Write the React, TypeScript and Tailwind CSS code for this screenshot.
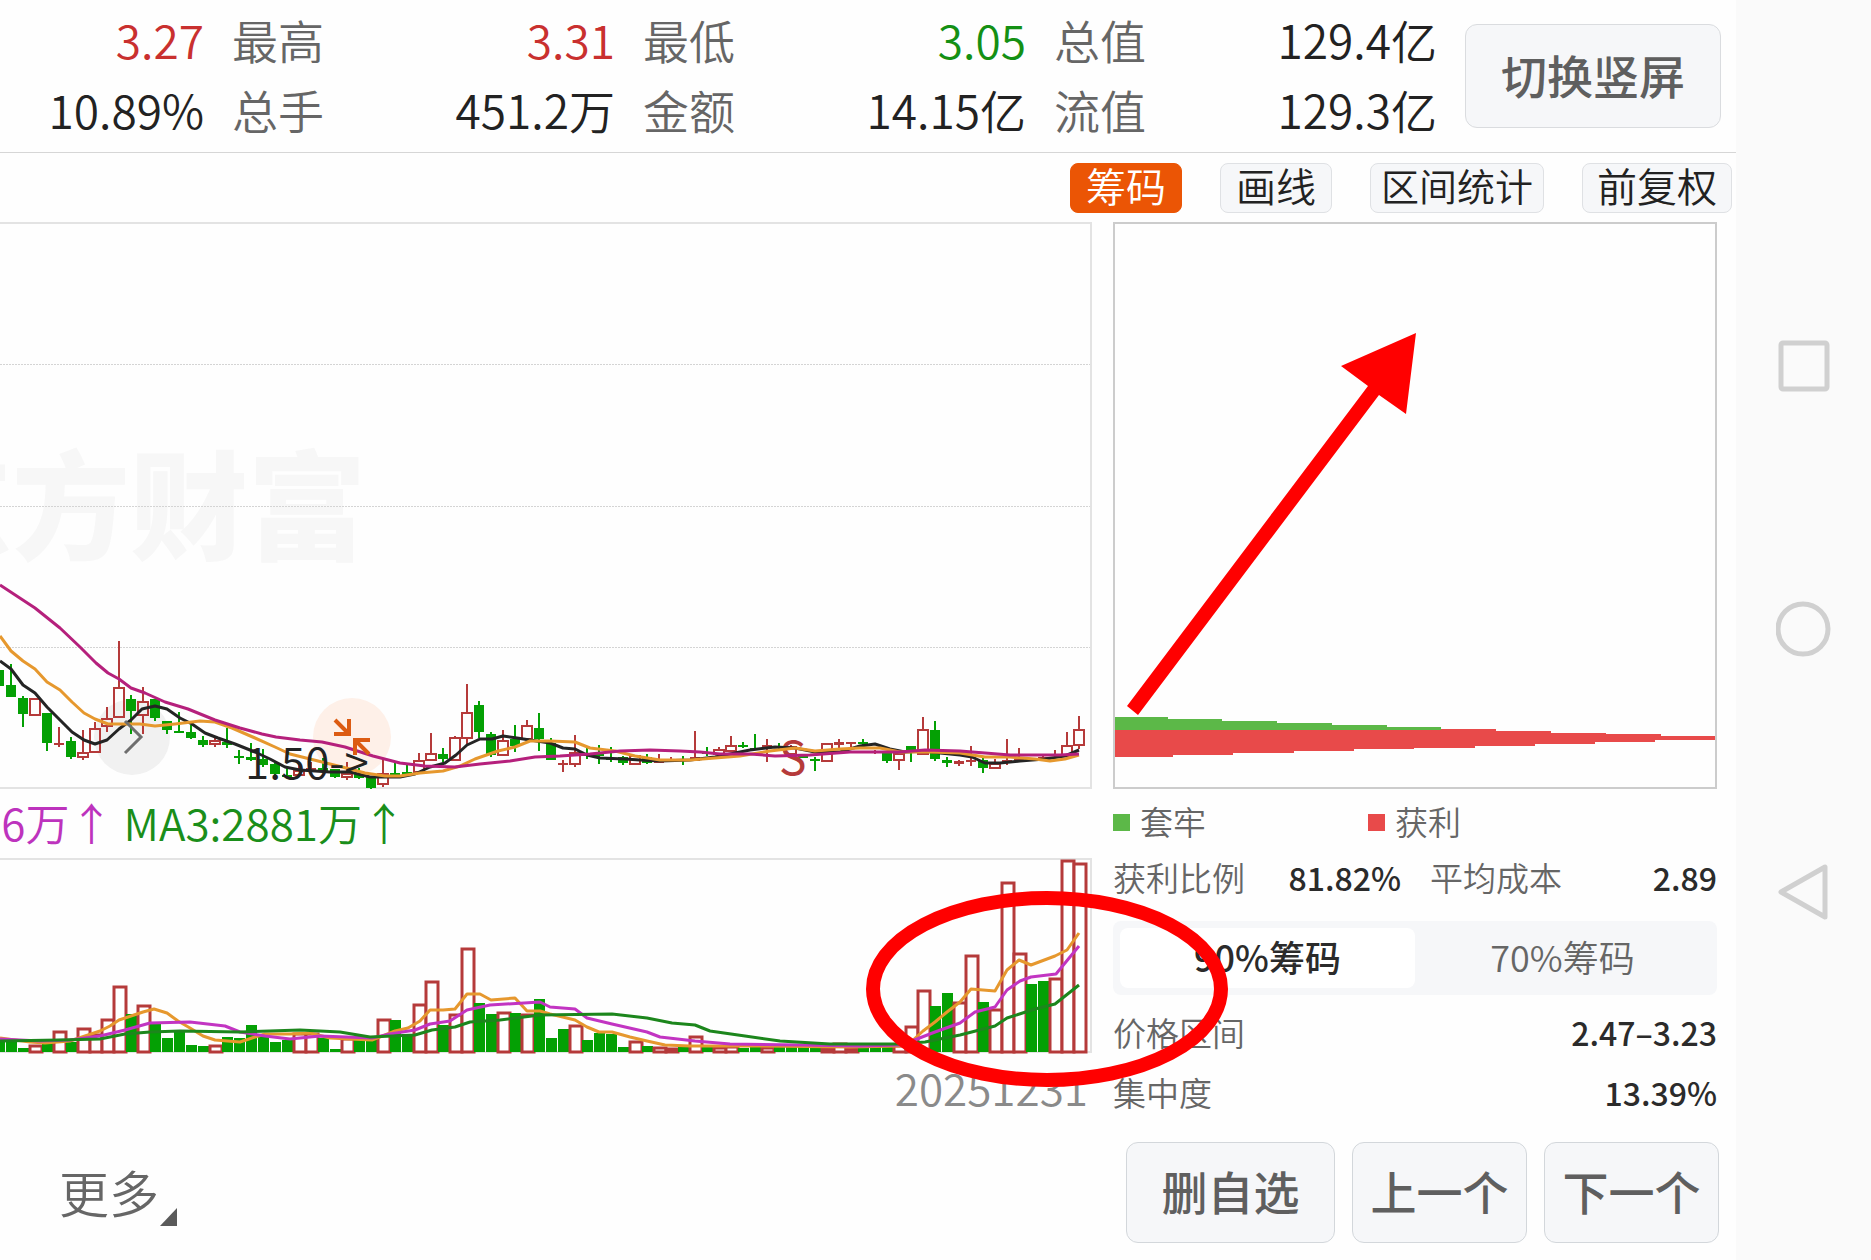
import React, { useState } from "react";

const RED = "#b53a3a";
const GREEN = "#04a004";

// [color, high, bodyTop, bodyBottom, low]
type Candle = [string, number, number, number, number];

// first candle is half outside of the screen
const candles: Candle[] = [
  ["g", 668, 670, 686, 699],
  ["g", 664, 685, 697, 697],
  ["g", 696, 698, 714, 727],
  ["r", 698, 698, 716, 716],
  ["g", 713, 713, 743, 751],
  ["r", 727, 743, 745, 747],
  ["g", 737, 741, 757, 759],
  ["r", 730, 752, 758, 760],
  ["r", 722, 728, 753, 753],
  ["r", 707, 718, 727, 732],
  ["r", 641, 687, 718, 718],
  ["g", 695, 699, 711, 734],
  ["r", 687, 701, 716, 734],
  ["g", 699, 699, 718, 721],
  ["g", 721, 721, 730, 734],
  ["g", 712, 731, 733, 733],
  ["g", 725, 732, 738, 739],
  ["g", 736, 740, 745, 747],
  ["r", 738, 740, 745, 747],
  ["g", 728, 742, 745, 748],
  ["g", 750, 756, 758, 764],
  ["g", 743, 757, 760, 761],
  ["g", 749, 759, 765, 767],
  ["g", 763, 764, 774, 776],
  ["g", 767, 775, 777, 777],
  ["r", 763, 770, 776, 776],
  ["r", 762, 768, 770, 770],
  ["g", 758, 768, 772, 772],
  ["g", 769, 769, 777, 778],
  ["r", 762, 773, 778, 780],
  ["g", 768, 774, 778, 779],
  ["g", 777, 777, 788, 789],
  ["r", 760, 773, 785, 787],
  ["g", 763, 773, 777, 777],
  ["g", 765, 772, 775, 775],
  ["r", 753, 760, 773, 773],
  ["r", 733, 753, 761, 761],
  ["g", 748, 754, 759, 762],
  ["r", 736, 737, 761, 761],
  ["r", 684, 712, 739, 745],
  ["g", 701, 705, 732, 738],
  ["g", 732, 734, 755, 757],
  ["r", 730, 740, 756, 756],
  ["g", 725, 739, 746, 752],
  ["r", 720, 725, 740, 740],
  ["g", 713, 728, 739, 751],
  ["g", 738, 743, 760, 760],
  ["r", 760, 763, 765, 772],
  ["r", 735, 752, 765, 767],
  ["g", 747, 754, 756, 759],
  ["g", 745, 754, 756, 764],
  ["g", 747, 758, 760, 762],
  ["g", 756, 757, 763, 765],
  ["r", 755, 755, 765, 765],
  ["g", 754, 757, 763, 764],
  ["r", 754, 760, 763, 763],
  ["r", 757, 760, 762, 762],
  ["g", 756, 759, 761, 765],
  ["r", 731, 757, 761, 761],
  ["g", 747, 752, 754, 756],
  ["r", 747, 749, 755, 755],
  ["r", 736, 745, 752, 752],
  ["g", 742, 745, 747, 748],
  ["g", 734, 748, 750, 750],
  ["r", 739, 745, 747, 762],
  ["g", 743, 746, 748, 749],
  ["r", 745, 746, 755, 757],
  ["g", 755, 756, 758, 758],
  ["g", 757, 759, 761, 771],
  ["r", 743, 743, 762, 762],
  ["r", 739, 742, 745, 748],
  ["r", 742, 742, 744, 747],
  ["g", 739, 742, 744, 747],
  ["r", 750, 751, 753, 754],
  ["g", 753, 753, 761, 763],
  ["r", 753, 753, 761, 770],
  ["g", 746, 746, 752, 762],
  ["r", 717, 729, 755, 755],
  ["g", 721, 730, 759, 761],
  ["g", 757, 760, 763, 767],
  ["r", 760, 761, 764, 766],
  ["r", 746, 760, 762, 766],
  ["g", 758, 760, 768, 773],
  ["r", 759, 763, 769, 769],
  ["r", 739, 760, 762, 765],
  ["r", 748, 759, 761, 761],
  ["r", 758, 758, 760, 760],
  ["r", 756, 757, 758, 759],
  ["r", 750, 754, 756, 757],
  ["r", 732, 745, 757, 757],
  ["r", 716, 729, 746, 749],
];

const volumes: [string, number][] = [
  ["g", 1041], ["g", 1041], ["g", 1048], ["r", 1045], ["g", 1043], ["r", 1031],
  ["g", 1042], ["r", 1028], ["r", 1034], ["r", 1019], ["r", 986], ["g", 1014],
  ["r", 1005], ["g", 1024], ["g", 1038], ["g", 1030], ["g", 1045], ["g", 1046],
  ["r", 1045], ["g", 1037], ["g", 1038], ["g", 1025], ["g", 1034], ["g", 1042],
  ["g", 1040], ["r", 1033], ["r", 1033], ["g", 1038], ["g", 1049], ["r", 1038],
  ["g", 1039], ["g", 1039], ["r", 1019], ["g", 1020], ["g", 1034], ["r", 1004],
  ["r", 981], ["g", 1025], ["r", 1014], ["r", 948], ["g", 1003], ["g", 1014],
  ["r", 1012], ["g", 1013], ["r", 1014], ["g", 999], ["g", 1038], ["g", 1029],
  ["r", 1025], ["g", 1040], ["g", 1033], ["g", 1034], ["g", 1047], ["r", 1041],
  ["g", 1046], ["r", 1047], ["r", 1048], ["g", 1047], ["r", 1036], ["g", 1047],
  ["r", 1047], ["r", 1046], ["g", 1048], ["g", 1045], ["r", 1047], ["g", 1047],
  ["g", 1047], ["g", 1047], ["g", 1047], ["r", 1048], ["r", 1043], ["r", 1048],
  ["g", 1046], ["g", 1046], ["g", 1046], ["r", 1045], ["r", 1026], ["r", 990],
  ["g", 1006], ["g", 993], ["r", 1002], ["r", 955], ["g", 1002], ["r", 1009],
  ["r", 882], ["r", 953], ["g", 984], ["g", 981], ["r", 978], ["r", 860],
  ["r", 863],
];

const priceLines = [
  {
    color: "#242424",
    points:
      "0,661 11,669 23,685 35,693 47,707 60,720 72,732 84,740 95,744 107,740 119,729 131,720 142,709 155,706 167,709 180,718 192,724 205,733 218,738 235,744 255,752 270,759 285,767 300,770 330,772 350,772 370,777 400,777 415,774 430,767 445,763 456,755 467,745 480,739 492,739 503,736 517,738 530,740 550,743 563,748 575,749 587,755 600,758 625,759 640,760 660,761 690,760 715,757 735,753 750,750 775,747 795,748 815,752 840,752 860,746 875,744 890,749 905,752 925,751 940,753 960,755 972,757 985,763 1000,763 1020,761 1045,759 1065,756 1079,750",
  },
  {
    color: "#e6982e",
    points:
      "0,636 11,651 23,661 35,669 47,682 60,690 72,702 84,713 95,719 108,724 120,724 140,724 155,726 175,724 200,721 215,722 232,728 255,738 275,747 290,754 310,759 330,764 350,769 365,773 385,776 400,776 420,773 443,771 460,766 475,759 498,751 515,747 530,741 550,741 575,742 590,748 615,751 635,756 660,760 690,760 715,758 740,756 770,751 795,748 815,751 840,749 860,748 880,748 900,752 930,752 960,753 985,757 1010,757 1035,759 1050,761 1065,759 1079,755",
  },
  {
    color: "#b5207c",
    points:
      "0,585 35,608 60,628 80,647 96,663 108,673 119,679 131,688 145,693 165,702 188,709 215,720 240,728 262,734 276,737 300,740 322,742 345,747 373,756 400,763 425,766 455,767 480,764 510,761 535,757 560,756 590,754 620,751 650,750 680,751 700,752 720,754 750,754 775,756 810,755 850,752 900,752 925,750 960,751 985,753 1010,755 1060,755 1079,754",
  },
];

const volumeLines = [
  {
    color: "#e6982e",
    points:
      "0,1038 30,1042 45,1043 70,1041 85,1036 100,1031 110,1026 119,1020 131,1016 143,1012 154,1009 167,1013 178,1021 190,1028 203,1036 215,1040 240,1042 255,1037 265,1034 290,1034 310,1033 330,1038 350,1039 372,1040 385,1035 395,1031 408,1028 420,1021 430,1010 443,1010 455,1009 467,994 480,994 491,1000 515,998 527,1011 540,1011 550,1014 575,1020 587,1027 599,1032 612,1032 630,1037 647,1041 665,1045 690,1046 760,1046 850,1047 900,1046 911,1042 923,1031 935,1022 947,1012 960,1002 971,989 995,991 1007,970 1019,960 1031,965 1055,956 1067,950 1079,933",
  },
  {
    color: "#c234c2",
    points:
      "0,1039 40,1041 70,1040 100,1036 125,1030 150,1023 190,1022 225,1026 240,1032 265,1036 290,1039 320,1036 372,1038 390,1034 415,1030 430,1024 450,1021 467,1010 490,1005 540,1002 550,1007 575,1009 587,1018 612,1024 647,1032 660,1037 695,1041 730,1044 800,1045 860,1046 900,1045 917,1039 935,1032 960,1023 975,1012 995,1007 1007,990 1020,981 1031,977 1056,974 1079,946",
  },
  {
    color: "#1c861c",
    points:
      "0,1041 60,1040 100,1039 125,1034 150,1032 180,1031 240,1032 300,1030 340,1032 370,1037 415,1035 432,1030 455,1027 470,1022 500,1020 540,1015 612,1014 647,1018 672,1023 695,1025 710,1031 745,1036 780,1041 830,1044 900,1044 925,1042 960,1035 995,1026 1007,1018 1035,1009 1055,1004 1079,985",
  },
];

const stats = [
  [
    { label: "最高", value: "3.31", color: "text-[#c9302f]" },
    { label: "总手", value: "451.2万", color: "text-[#222222]" },
  ],
  [
    { label: "最低", value: "3.05", color: "text-[#149014]" },
    { label: "金额", value: "14.15亿", color: "text-[#222222]" },
  ],
  [
    { label: "总值", value: "129.4亿", color: "text-[#222222]" },
    { label: "流值", value: "129.3亿", color: "text-[#222222]" },
  ],
];

const centerX = (i: number) => 12 * i - 1;

function Lines({ lines }: { lines: { color: string; points: string }[] }) {
  return (
    <>
      {lines.map((l) => (
        <polyline
          key={l.color}
          points={l.points}
          fill="none"
          stroke={l.color}
          strokeWidth="3"
          strokeLinejoin="round"
        />
      ))}
    </>
  );
}

function PriceChart() {
  return (
    <div className="flex justify-end border-y-2 border-r-2 border-[#e3e3e3]">
      <svg
        className="block shrink-0 overflow-visible"
        width="1090"
        height="563"
        viewBox="0 224 1090 563"
      >
        <text x="-106" y="551" fontSize="118" fontWeight="900" fill="#f7f7f7">
          东方财富
        </text>
        {[364, 506, 647].map((y) => (
          <line
            key={y}
            x1="0"
            x2="1090"
            y1={y + 0.5}
            y2={y + 0.5}
            stroke="#d4d4d4"
            strokeDasharray="2 1"
          />
        ))}
        <circle cx="132" cy="737" r="38" fill="#f1f1f1" />
        <circle cx="352" cy="737" r="39" fill="#fef0e8" />
        {candles.map(([c, high, top, bottom, low], i) => {
          const x = centerX(i);
          const color = c === "r" ? RED : GREEN;
          const hollow = c === "r" && bottom - top > 4;
          return (
            <g key={i} stroke={color} strokeWidth="2" fill="none">
              <path d={`M${x} ${high}V${top}M${x} ${bottom}V${low}`} />
              {hollow ? (
                <rect x={x - 5} y={top + 1} width="10" height={bottom - top - 2} />
              ) : (
                <rect
                  x={x - 5}
                  y={top}
                  width="10"
                  height={bottom - top}
                  fill={color}
                  stroke="none"
                />
              )}
            </g>
          );
        })}
        <text x="779" y="775" fontSize="46" fill={RED}>
          S
        </text>
        <Lines lines={priceLines} />
        <path d="M125 721L141 737L125 753" fill="none" stroke="#6e6e6e" strokeWidth="3" />
        <path
          d="M335 720L348 733M334 734H349V719M370 740H355V755M356 741L369 754"
          fill="none"
          stroke="#dc5b12"
          strokeWidth="4"
        />
        <text x="245" y="779" fontSize="44" fontWeight="350" fill="#222222">
          1.50-&gt;
        </text>
      </svg>
    </div>
  );
}

function VolumeChart() {
  return (
    <div className="flex justify-end border-y-2 border-r-2 border-[#e3e3e3]">
      <svg
        className="block shrink-0 overflow-visible"
        width="1090"
        height="191"
        viewBox="0 860 1090 191"
      >
        {volumes.map(([c, top], i) => {
          const x = centerX(i);
          return c === "r" ? (
            <rect
              key={i}
              x={x - 5}
              y={top + 1}
              width="12"
              height={1051 - top}
              fill="#ffffff"
              stroke={RED}
              strokeWidth="3"
            />
          ) : (
            <rect key={i} x={x - 5} y={top} width="11" height={1052 - top} fill={GREEN} />
          );
        })}
        <Lines lines={volumeLines} />
      </svg>
    </div>
  );
}

function ChipChart() {
  return (
    <div className="border-2 border-[#cccccc]">
      <svg className="block" width="600" height="563" viewBox="1115 224 600 563">
        <path
          d="M1112 717H1168V719H1222V721H1277V723H1332V725H1387V727H1441V731H1112Z"
          fill="#5cb848"
        />
        <path
          d="M1112 730H1441V729H1496V731H1551V733H1606V734H1661V736H1717V740H1655V742H1595V744H1535V746H1475V748H1414V749H1354V751H1294V753H1233V755H1173V757H1112Z"
          fill="#e84a4a"
        />
        <path d="M1127 706L1368 386L1341 366L1416 333L1406 414L1379 395L1138 715Z" fill="#ff0000" />
      </svg>
    </div>
  );
}

function Row({ label, value }: { label: string; value: string }) {
  return (
    <div className="flex justify-between">
      <dt className="font-[350] text-[#666666]">{label}</dt>
      <dd className="text-[32px] font-medium text-[#2b2b2b]">{value}</dd>
    </div>
  );
}

export default function App() {
  const [tool, setTool] = useState("筹码");
  const [range, setRange] = useState("90%筹码");

  const toolCol = (name: string) =>
    tool === name
      ? "bg-[#eb5505] border-[#eb5505] text-white"
      : "bg-[#f6f7f9] border-[#dfe1e4] text-[#222222]";

  return (
    <div className="flex min-h-screen bg-[#fefefe] font-['Noto_Sans_CJK_SC',sans-serif]">
      <div className="flex-1 min-w-0 overflow-hidden">
        <header className="flex justify-end gap-7 border-b border-[#d6d6d6] pt-1 pb-2 pr-[15px] text-[46px] leading-[70px] font-[350]">
          <div className="flex-1 text-right">
            <p className="text-[#c9302f]">3.27</p>
            <p className="text-[#222222]">10.89%</p>
          </div>
          {stats.map((col) => (
            <dl key={col[0].label} className="w-[383px]">
              {col.map((s) => (
                <div key={s.label} className="flex justify-between">
                  <dt className="text-[#666666]">{s.label}</dt>
                  <dd className={s.color}>{s.value}</dd>
                </div>
              ))}
            </dl>
          ))}
          <button className="mt-5 h-[104px] w-64 rounded-xl border border-[#dadcdf] bg-[#f6f7f9] pb-1 font-medium text-[#5f5f5f]">
            切换竖屏
          </button>
        </header>

        <nav className="flex justify-end gap-[38px] pt-[10px] pr-1 pb-[9px] text-[40px] leading-[42px] font-[350]">
          <button
            className={`h-[50px] w-[112px] rounded-lg border pb-[6px] ${toolCol("筹码")}`}
            onClick={() => setTool("筹码")}
          >
            筹码
          </button>
          <button
            className={`h-[50px] w-[112px] rounded-lg border pb-[6px] ${toolCol("画线")}`}
            onClick={() => setTool("画线")}
          >
            画线
          </button>
          <button
            className={`h-[50px] w-[174px] rounded-lg border pb-[6px] text-[38px] ${toolCol("区间统计")}`}
            onClick={() => setTool("区间统计")}
          >
            区间统计
          </button>
          <button
            className={`h-[50px] w-[150px] rounded-lg border pb-[6px] ${toolCol("前复权")}`}
            onClick={() => setTool("前复权")}
          >
            前复权
          </button>
        </nav>

        <main className="flex gap-[21px] pr-[19px]">
          <section className="flex-1 min-w-0">
            <PriceChart />
            <div className="flex h-[69px] w-[406px] items-center justify-end gap-[10px] overflow-hidden pb-1 text-[44px] whitespace-nowrap font-[350]">
              <span className="text-[#bd33bd]">66万↑</span>
              <span className="text-[#1a8e1a]">MA3:2881万↑</span>
            </div>
            <VolumeChart />
            <p className="pr-1 text-right text-[44px] leading-[69px] text-[#8a8a8a] font-[350]">
              20251231
            </p>
          </section>

          <aside className="relative w-[604px] shrink-0 text-[33px] leading-[50px]">
            <ChipChart />
            <ul className="flex h-[63px] items-center font-[350] text-[#666666]">
              <li className="flex w-[255px] items-center gap-[10px]">
                <span className="mt-1 size-[17px] bg-[#5cb848]" />
                套牢
              </li>
              <li className="flex items-center gap-[10px]">
                <span className="mt-1 size-[17px] bg-[#e84a4a]" />
                获利
              </li>
            </ul>
            <dl className="flex gap-[29px]">
              <div className="w-[288px]">
                <Row label="获利比例" value="81.82%" />
              </div>
              <div className="flex-1">
                <Row label="平均成本" value="2.89" />
              </div>
            </dl>
            <div className="mt-[19px] flex h-[74px] rounded-lg bg-[#f6f7f9] p-[7px] text-[36px]">
              {["90%筹码", "70%筹码"].map((r) => (
                <button
                  key={r}
                  onClick={() => setRange(r)}
                  className={
                    range === r
                      ? "flex-1 rounded-lg bg-white pb-1 font-medium text-[#2b2b2b]"
                      : "flex-1 rounded-lg pb-1 font-[350] text-[#666666]"
                  }
                >
                  {r}
                </button>
              ))}
            </div>
            <dl className="flex flex-col gap-[10px] pt-3">
              <Row label="价格区间" value="2.47–3.23" />
              <Row label="集中度" value="13.39%" />
            </dl>
            {/* hand drawn mark over the volume bars */}
            <svg
              className="pointer-events-none absolute top-[669px] -left-[247px]"
              width="363"
              height="197"
              viewBox="0 0 363 197"
            >
              <ellipse
                cx="181"
                cy="98"
                rx="174"
                ry="91"
                fill="none"
                stroke="#ff0000"
                strokeWidth="14"
              />
            </svg>
          </aside>
        </main>

        <footer className="flex items-center justify-between pt-5 pr-[17px] pb-4 pl-[59px]">
          <button className="flex items-end pb-1 text-[50px] leading-[70px] font-[350] text-[#666666]">
            更多
            <svg width="19" height="18" viewBox="0 0 19 18">
              <path d="M18 0V18H1Z" fill="#5a5a5a" />
            </svg>
          </button>
          <div className="flex gap-[17px] text-[46px] font-medium text-[#5f5f5f]">
            <button className="h-[101px] w-[209px] rounded-xl border border-[#d3d7db] bg-[#f6f7f9] pb-1">
              删自选
            </button>
            <button className="h-[101px] w-[175px] rounded-xl border border-[#d3d7db] bg-[#f6f7f9] pb-1">
              上一个
            </button>
            <button className="h-[101px] w-[175px] rounded-xl border border-[#d3d7db] bg-[#f6f7f9] pb-1">
              下一个
            </button>
          </div>
        </footer>
      </div>

      <div className="flex w-[135px] shrink-0 flex-col items-center gap-[207px] bg-[#fafafa] pt-[338px]">
        <button aria-label="recent">
          <svg width="56" height="56" viewBox="0 0 56 56" fill="none" stroke="#d0d0d0">
            <rect x="5" y="5" width="46" height="46" rx="2" strokeWidth="5" />
          </svg>
        </button>
        <button aria-label="home">
          <svg width="56" height="56" viewBox="0 0 56 56" fill="none" stroke="#d0d0d0">
            <circle cx="27" cy="28" r="25" strokeWidth="5" />
          </svg>
        </button>
        <button aria-label="back">
          <svg width="56" height="56" viewBox="0 0 56 56" fill="none" stroke="#d0d0d0">
            <path d="M5 28L49 3V53Z" strokeWidth="5" strokeLinejoin="round" />
          </svg>
        </button>
      </div>
    </div>
  );
}
